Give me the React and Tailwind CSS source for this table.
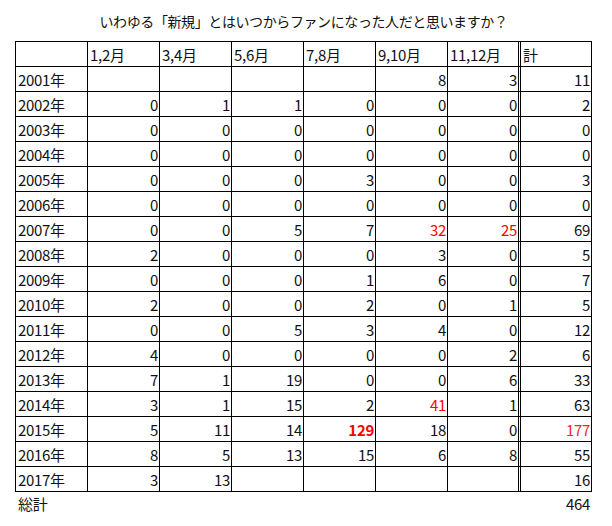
import React from "react";

const headers = ["", "1,2月", "3,4月", "5,6月", "7,8月", "9,10月", "11,12月", "計"];

const R = "text-[#ff0000]";
const rows = [
  ["2001年", "", "", "", "", "8", "3", "11"],
  ["2002年", "0", "1", "1", "0", "0", "0", "2"],
  ["2003年", "0", "0", "0", "0", "0", "0", "0"],
  ["2004年", "0", "0", "0", "0", "0", "0", "0"],
  ["2005年", "0", "0", "0", "3", "0", "0", "3"],
  ["2006年", "0", "0", "0", "0", "0", "0", "0"],
  ["2007年", "0", "0", "5", "7", { v: "32", c: R }, { v: "25", c: R }, "69"],
  ["2008年", "2", "0", "0", "0", "3", "0", "5"],
  ["2009年", "0", "0", "0", "1", "6", "0", "7"],
  ["2010年", "2", "0", "0", "2", "0", "1", "5"],
  ["2011年", "0", "0", "5", "3", "4", "0", "12"],
  ["2012年", "4", "0", "0", "0", "0", "2", "6"],
  ["2013年", "7", "1", "19", "0", "0", "6", "33"],
  ["2014年", "3", "1", "15", "2", { v: "41", c: R }, "1", "63"],
  ["2015年", "5", "11", "14", { v: "129", c: R + " font-bold" }, "18", "0", { v: "177", c: "text-[#f02828]" }],
  ["2016年", "8", "5", "13", "15", "6", "8", "55"],
  ["2017年", "3", "13", "", "", "", "", "16"],
];

function cellClass(i) {
  if (i === 0) return "w-[72px] border-r border-black";
  if (i === 6) return "w-[70px]";
  if (i === 7) return "w-[74px] border-l-[3px] border-double border-r border-black";
  return "w-[72px] border-r border-black";
}

export default function App() {
  return (
    <div
      className="w-[612px] h-[526px] bg-white text-[15px] text-[#111]"
      style={{ fontFamily: '"Noto Sans CJK JP", "Noto Sans", sans-serif' }}
    >
      <div className="pt-[11px] pl-[15px] w-[592px] h-[41px] text-center text-[14px] leading-[20px] tracking-[-0.4px]">
        いわゆる「新規」とはいつからファンになった人だと思いますか？
      </div>
      <div className="ml-[15px] w-[577px] border-t border-l border-black">
        <div className="flex h-[25px] border-b border-black">
          {headers.map((h, i) => (
            <div
              key={i}
              className={`${cellClass(i)} h-[24px] flex items-center pl-[2px] leading-none tracking-[-0.3px]`}
            >
              {h}
            </div>
          ))}
        </div>
        {rows.map((r, ri) => (
          <div key={ri} className="flex h-[25px] border-b border-black">
            {r.map((c, i) => {
              const v = typeof c === "object" ? c.v : c;
              const cc = typeof c === "object" ? c.c : "";
              return (
                <div
                  key={i}
                  className={`${cellClass(i)} h-[24px] flex items-center leading-none tracking-[-0.3px] ${
                    i === 0 ? "pl-[2px]" : "justify-end pr-[1px]"
                  } ${cc}`}
                >
                  {v}
                </div>
              );
            })}
          </div>
        ))}
      </div>
      <div className="ml-[15px] w-[577px] flex h-[25px] items-center tracking-[-0.3px]">
        <div className="pl-[3px] flex-1">総計</div>
        <div className="pr-[2px]">464</div>
      </div>
    </div>
  );
}
